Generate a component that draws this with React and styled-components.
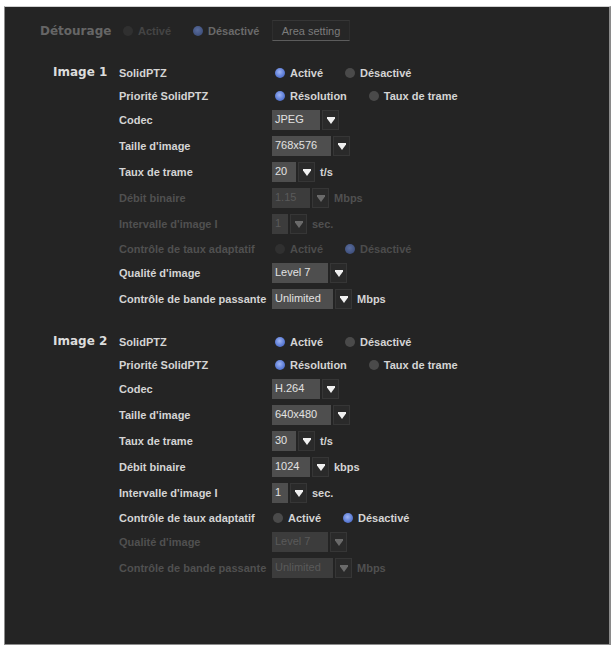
import React from 'react';
import styled, { createGlobalStyle } from 'styled-components';

const GlobalStyle = createGlobalStyle`
  html, body { margin: 0; padding: 0; background: #ffffff; }
  body { font-family: "Liberation Sans", Arial, sans-serif; }
`;

const Page = styled.div`
  padding: 6px 4px 3px 4px;
`;

const Panel = styled.div`
  box-sizing: border-box;
  width: 607px;
  height: 639px;
  background: #242424;
  border: 1px solid #8c8c8c;
  border-top-color: #d0d0d0;
  border-right: 2px solid #8a8a8a;
  padding-top: 13px;
`;

/* Clipping row at the top */
const Header = styled.div`
  display: grid;
  grid-template-columns: 83px 149px auto;
  align-items: center;
  height: 21px;
  padding-left: 35px;
`;

const HeaderTitle = styled.span`
  font-family: "DejaVu Sans", Verdana, sans-serif;
  font-weight: bold;
  font-size: 12px;
  color: #666666;
`;

const AreaButton = styled.button`
  box-sizing: border-box;
  width: 78px;
  height: 21px;
  padding: 0;
  background: #262626;
  border: 1px solid #2e2e2e;
  border-top-color: #363636;
  border-bottom: 1px solid #5c5c5c;
  color: #7c7c7c;
  font-family: "Liberation Sans", Arial, sans-serif;
  font-size: 11px;
  cursor: pointer;
`;

const Section = styled.section`
  display: flex;
  padding-left: 48px;
  margin-top: ${p => p.$gap}px;
`;

const SectionTitle = styled.h2`
  flex: 0 0 66px;
  margin: 0;
  height: 23px;
  line-height: 23px;
  font-family: "DejaVu Sans", Verdana, sans-serif;
  font-weight: bold;
  font-size: 12px;
  color: #dcdcdc;
`;

const Rows = styled.div`
  display: flex;
  flex-direction: column;
`;

const Row = styled.div`
  display: flex;
  align-items: center;
  height: ${p => (p.$kind === 'radio' ? 23 : 26)}px;
`;

const Label = styled.span`
  flex: 0 0 153px;
  white-space: nowrap;
  font-weight: bold;
  font-size: 11px;
  color: ${p => (p.$off ? '#505050' : '#d4d4d4')};
`;

const Options = styled.div`
  display: flex;
  align-items: center;
  gap: 22px;
  padding-left: ${p => p.$indent}px;
`;

const Option = styled.label`
  display: flex;
  align-items: center;
  gap: 5px;
  font-weight: bold;
  font-size: 11px;
  white-space: nowrap;
  color: ${p => p.$tone};
`;

const Dot = styled.span`
  box-sizing: border-box;
  width: 10px;
  height: 10px;
  border-radius: 50%;
  background: ${p => p.$fill};
`;

const Picker = styled.div`
  display: flex;
  align-items: center;
`;

const Field = styled.span`
  box-sizing: border-box;
  width: ${p => p.$w}px;
  height: 20px;
  padding: 2px 0 0 3px;
  line-height: 14px;
  overflow: hidden;
  white-space: nowrap;
  font-size: 11px;
  background: ${p => (p.$off ? '#3c3c3c' : '#4e4e4e')};
  color: ${p => (p.$off ? '#5a5a5a' : '#e2e2e2')};
`;

const ArrowBox = styled.span`
  box-sizing: border-box;
  width: 17px;
  height: 20px;
  margin-left: 2px;
  display: flex;
  align-items: center;
  justify-content: center;
  background: #2a2a2a;
  border: 1px solid #363636;
`;

const Unit = styled.span`
  margin-left: 5px;
  font-weight: bold;
  font-size: 11px;
  color: ${p => (p.$off ? '#505050' : '#d4d4d4')};
`;

const dotFill = (checked, off) => {
  if (checked) {
    return off
      ? 'radial-gradient(circle at 45% 40%, #5a6d9e 0%, #34446e 100%)'
      : 'radial-gradient(circle at 45% 40%, #9fb4f2 0%, #5f7fd8 55%, #3f5bb0 100%)';
  }
  return off ? '#303030' : '#4a4a4a';
};

const RadioGroup = ({ options, off, indent = 3, tone }) => (
  <Options $indent={indent}>
    {options.map(o => (
      <Option key={o.text} $tone={tone ? tone(o) : off ? '#4c4c4c' : '#d4d4d4'}>
        <Dot $fill={dotFill(o.checked, off)} />
        {o.text}
      </Option>
    ))}
  </Options>
);

const Select = ({ value, width, unit, off }) => (
  <Picker>
    <Field $w={width} $off={off}>{value}</Field>
    <ArrowBox>
      <svg width="8" height="7" viewBox="0 0 8 7">
        <path d="M0 0H8V1.5L4 7L0 1.5Z" fill={off ? '#6a6a6a' : '#f0f0f0'} />
      </svg>
    </ArrowBox>
    {unit && <Unit $off={off}>{unit}</Unit>}
  </Picker>
);

const onOff = first => [
  { text: 'Activé', checked: first },
  { text: 'Désactivé', checked: !first },
];

const sections = [
  {
    title: 'Image 1',
    gap: 20,
    rows: [
      { kind: 'radio', label: 'SolidPTZ', options: onOff(true) },
      { kind: 'radio', label: 'Priorité SolidPTZ', options: [{ text: 'Résolution', checked: true }, { text: 'Taux de trame', checked: false }] },
      { kind: 'select', label: 'Codec', value: 'JPEG', width: 48 },
      { kind: 'select', label: "Taille d'image", value: '768x576', width: 59 },
      { kind: 'select', label: 'Taux de trame', value: '20', width: 24, unit: 't/s' },
      { kind: 'select', label: 'Débit binaire', value: '1.15', width: 38, unit: 'Mbps', off: true },
      { kind: 'select', label: "Intervalle d'image I", value: '1', width: 16, unit: 'sec.', off: true },
      { kind: 'radio', label: 'Contrôle de taux adaptatif', options: onOff(false), off: true },
      { kind: 'select', label: "Qualité d'image", value: 'Level 7', width: 56 },
      { kind: 'select', label: 'Contrôle de bande passante', value: 'Unlimited', width: 61, unit: 'Mbps' },
    ],
  },
  {
    title: 'Image 2',
    gap: 18,
    rows: [
      { kind: 'radio', label: 'SolidPTZ', options: onOff(true) },
      { kind: 'radio', label: 'Priorité SolidPTZ', options: [{ text: 'Résolution', checked: true }, { text: 'Taux de trame', checked: false }] },
      { kind: 'select', label: 'Codec', value: 'H.264', width: 48 },
      { kind: 'select', label: "Taille d'image", value: '640x480', width: 59 },
      { kind: 'select', label: 'Taux de trame', value: '30', width: 24, unit: 't/s' },
      { kind: 'select', label: 'Débit binaire', value: '1024', width: 38, unit: 'kbps' },
      { kind: 'select', label: "Intervalle d'image I", value: '1', width: 16, unit: 'sec.' },
      { kind: 'radio', label: 'Contrôle de taux adaptatif', options: onOff(false), indent: 1 },
      { kind: 'select', label: "Qualité d'image", value: 'Level 7', width: 56, off: true },
      { kind: 'select', label: 'Contrôle de bande passante', value: 'Unlimited', width: 61, unit: 'Mbps', off: true },
    ],
  },
];

export default function App() {
  return (
    <>
      <GlobalStyle />
      <Page>
        <Panel>
          <Header>
            <HeaderTitle>Détourage</HeaderTitle>
            <RadioGroup
              options={onOff(false)}
              off
              indent={0}
              tone={o => (o.checked ? '#6a6a6a' : '#444444')}
            />
            <AreaButton type="button">Area setting</AreaButton>
          </Header>
          {sections.map(s => (
            <Section key={s.title} $gap={s.gap}>
              <SectionTitle>{s.title}</SectionTitle>
              <Rows>
                {s.rows.map(r => (
                  <Row key={r.label} $kind={r.kind}>
                    <Label $off={r.off}>{r.label}</Label>
                    {r.kind === 'radio' ? (
                      <RadioGroup options={r.options} off={r.off} indent={r.indent ?? 3} />
                    ) : (
                      <Select value={r.value} width={r.width} unit={r.unit} off={r.off} />
                    )}
                  </Row>
                ))}
              </Rows>
            </Section>
          ))}
        </Panel>
      </Page>
    </>
  );
}
